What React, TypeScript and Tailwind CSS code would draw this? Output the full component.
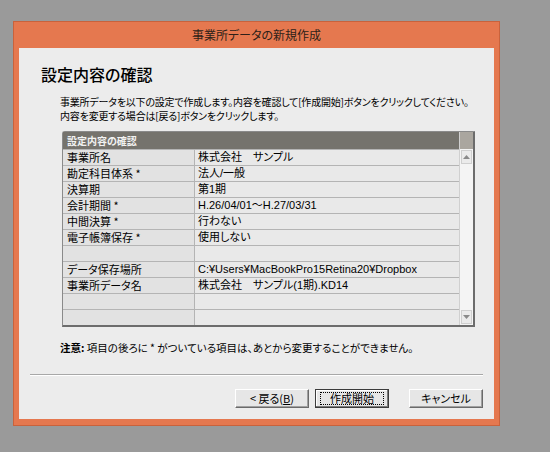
const rows: [string, string][] = [
  ["事業所名", "株式会社　サンプル"],
  ["勘定科目体系 *", "法人/一般"],
  ["決算期", "第1期"],
  ["会計期間 *", "H.26/04/01～H.27/03/31"],
  ["中間決算 *", "行わない"],
  ["電子帳簿保存 *", "使用しない"],
  ["", ""],
  ["データ保存場所", "C:¥Users¥MacBookPro15Retina20¥Dropbox"],
  ["事業所データ名", "株式会社　サンプル(1期).KD14"],
  ["", ""],
  ["", ""],
];

const font =
  "[font-family:'Noto_Sans_CJK_JP','Noto_Sans',sans-serif] [font-feature-settings:'palt']";

function Button({ label, isDefault }: { label: React.ReactNode; isDefault?: boolean }) {
  return (
    <div
      className={
        "w-[74px] h-[19px] flex items-center justify-center bg-[#e6e6e6] text-[11px] text-black whitespace-nowrap " +
        (isDefault
          ? "border border-[#3c3c3c] shadow-[inset_-1px_-1px_0_#7a7a7a,inset_1px_1px_0_#fff]"
          : "border-t border-l border-t-white border-l-white border-r border-b border-r-[#6a6a6a] border-b-[#6a6a6a] shadow-[inset_-1px_-1px_0_#a0a0a0]")
      }
    >
      {isDefault ? (
        <span className="border border-dotted border-black h-[13px] w-[64px] flex items-center justify-center leading-none">
          {label}
        </span>
      ) : (
        <span className="leading-none">{label}</span>
      )}
    </div>
  );
}

export default function App() {
  return (
    <div className={"w-[550px] h-[452px] bg-[#9a9a9a] pt-[21px] pl-[13px] " + font}>
      <div className="w-[487px] h-[405px] bg-[#e5784f] border border-[#c9623c] px-[5px] pb-[6px] flex flex-col">
        <div className="h-[26px] flex items-center justify-center text-[12px] text-[#2e1f18] leading-none">
          事業所データの新規作成
        </div>
        <div className="flex-1 bg-[#ececec] flex flex-col">
          <h1 className="ml-[22px] mt-[16px] text-[16px] leading-[20px] font-medium text-black">
            設定内容の確認
          </h1>
          <div className="ml-[41px] mt-[11px] text-[10px] leading-[14px] tracking-[-0.2px] text-black whitespace-nowrap">
            <p>事業所データを以下の設定で作成します。内容を確認して[作成開始]ボタンをクリックしてください。</p>
            <p>内容を変更する場合は[戻る]ボタンをクリックします。</p>
          </div>

          <div className="ml-[43px] mt-[8px] w-[413px] rounded-tl-[3px] border-l border-t border-[#8a8a8a] border-r-2 border-b-2 border-r-[#6c6c6c] border-b-[#6c6c6c] flex bg-[#e8e8e8]">
            <div className="flex-1 flex flex-col">
              <div className="h-[17px] bg-[#75736d] flex items-center pl-[4px] text-[10px] font-bold text-[#f2f2f2] leading-none">
                設定内容の確認
              </div>
              {rows.map(([k, v], i) => (
                <div key={i} className="h-[16px] flex border-t border-[#b4b4b4] text-[11px] text-black leading-none">
                  <div className="w-[132px] bg-[#e2e2e2] border-r border-[#b4b4b4] flex items-center pl-[4px]">
                    {k}
                  </div>
                  <div className="flex-1 bg-[#e9e9e9] flex items-center pl-[3px] [font-family:'Liberation_Sans','Noto_Sans_CJK_JP',sans-serif] [font-feature-settings:'palt']">
                    {v}
                  </div>
                </div>
              ))}
            </div>
            <div className="w-[14px] flex flex-col bg-[#f4f4f4] border-l border-[#d0d0d0]">
              <div className="h-[17px] bg-[#aaa69f]" />
              <div className="h-[14px] mt-[1px] mx-[1px] bg-[#ebebeb] border border-[#cfcfcf] flex items-center justify-center">
                <svg width="7" height="4" viewBox="0 0 7 4">
                  <path d="M3.5 0L7 4H0z" fill="#8a8a8a" />
                </svg>
              </div>
              <div className="flex-1" />
              <div className="h-[14px] mx-[1px] mb-[1px] bg-[#ebebeb] border border-[#cfcfcf] flex items-center justify-center">
                <svg width="7" height="4" viewBox="0 0 7 4">
                  <path d="M0 0H7L3.5 4z" fill="#8a8a8a" />
                </svg>
              </div>
            </div>
          </div>

          <p className="ml-[41px] mt-[14px] text-[10.5px] leading-[14px] text-black whitespace-nowrap">
            <span className="font-bold">注意:</span> 項目の後ろに * がついている項目は、あとから変更することができません。
          </p>

          <div className="mx-[11px] mt-[19px] h-[2px] border-t border-[#a8a8a8] border-b border-b-white" />

          <div className="flex justify-end mt-[13px] mr-[11px]">
            <div className="flex gap-[6px]">
              <Button label={<>&lt; 戻る(<span className="underline">B</span>)</>} />
              <Button label="作成開始" isDefault />
            </div>
            <div className="ml-[20px]">
              <Button label="キャンセル" />
            </div>
          </div>
        </div>
      </div>
    </div>
  );
}
